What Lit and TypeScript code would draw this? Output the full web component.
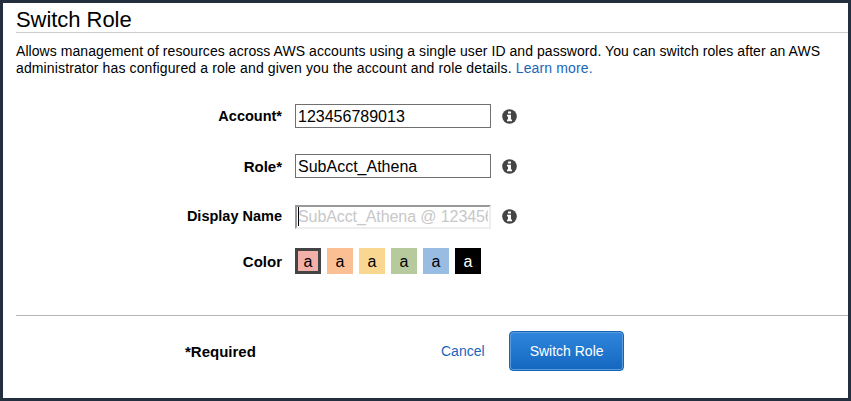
import { LitElement, html, css, svg } from "lit";
import { customElement } from "lit/decorators.js";
import { classMap } from "lit/directives/class-map.js";

const swatches = ["red", "orange", "yellow", "green", "blue", "black"];

@customElement("info-icon")
class InfoIcon extends LitElement {
  static styles = css`
    :host { display: block; width: 15px; height: 15px; }
    svg { display: block; }
  `;
  render() {
    return html`<svg width="15" height="15" viewBox="0 0 15 15">
      ${svg`<circle cx="7.5" cy="7.5" r="7.3" fill="#444"/>
      <path fill="#fff" d="M6 2.5h3v2H6zM5 5.8h4v4.7h1v1.7H5v-1.7h1V7.5H5z"/>`}
    </svg>`;
  }
}

@customElement("app-root")
class AppRoot extends LitElement {
  static styles = css`
    :host {
      display: block;
      box-sizing: border-box;
      width: 851px;
      height: 401px;
      border: 3px solid #232f3e;
      background: #fff;
      color: #000;
      font: 14px/17px "Liberation Sans", Arial, sans-serif;
      padding-left: 13px;
      overflow: hidden;
    }
    h1 {
      margin: 0;
      height: 29px;
      border-bottom: 1px solid #ccc;
      font-size: 22px;
      font-weight: 400;
      line-height: 33px;
      letter-spacing: -0.05px;
    }
    .intro { margin: 10px 0 0; height: 34px; white-space: nowrap; }
    .line { display: block; letter-spacing: 0.062px; }
    .line + .line { letter-spacing: 0.128px; }
    .link { color: #1a66bb; text-decoration: none; }
    .row { display: flex; align-items: center; height: 24px; margin-bottom: 26px; }
    .form { padding-top: 27px; height: 239px; box-sizing: border-box; border-bottom: 1px solid #b5b5b5; }
    .label { width: 266px; margin-right: 13px; text-align: right; font-weight: 700; font-size: 14.5px; white-space: nowrap; }
    .large { font-size: 15px; }
    .field {
      box-sizing: border-box;
      width: 196px;
      height: 24px;
      border: 1px solid #707070;
      padding: 0 2px;
      font-size: 16px;
      line-height: 23px;
      white-space: nowrap;
      overflow: hidden;
      margin-right: 11px;
    }
    .empty {
      display: flex;
      position: relative;
      top: 1px;
      border: 2px solid;
      border-color: #999 #eee #eee #999;
      padding: 0 1px;
      color: #c8c8c8;
      line-height: 20px;
      letter-spacing: -0.09px;
    }
    .value { overflow: hidden; }
    .caret { flex: none; width: 1px; height: 19px; background: #000; margin-right: -1px; }
    .colors { height: 26px; margin-top: -6px; }
    .palette { display: flex; gap: 6px; }
    .swatch {
      box-sizing: border-box;
      width: 26px;
      height: 26px;
      font-size: 16px;
      line-height: 27px;
      text-align: center;
    }
    .chosen { border: 3px solid #444; line-height: 21px; }
    .red { background: #f2b0a9; }
    .orange { background: #fbbf93; }
    .yellow { background: #fad791; }
    .green { background: #b7ca9d; }
    .blue { background: #99bce3; }
    .black { background: #000; color: #fff; }
    .actions { display: flex; align-items: center; height: 40px; padding-top: 15px; }
    .required { width: 256px; padding-left: 169px; box-sizing: border-box; font-weight: 700; font-size: 15px; white-space: nowrap; margin-right: 169px; }
    .button {
      box-sizing: border-box;
      width: 115px;
      height: 40px;
      margin-left: 24px;
      border: 1px solid #1464b8;
      border-radius: 4px;
      background: linear-gradient(#2f86dc, #1467bf);
      box-shadow: inset 0 0 0 1px #5a9bdc;
      color: #fff;
      font: inherit;
      padding: 0 0 0 1px;
    }
  `;

  label(text: string, required = false, large = false) {
    return html`<span class=${classMap({ label: true, large })}>${text}${required ? "*" : ""}</span>`;
  }

  render() {
    return html`
      <h1>Switch Role</h1>
      <p class="intro">
        <span class="line">Allows management of resources across AWS accounts using a single user ID and password. You can switch roles after an AWS</span>
        <span class="line">administrator has configured a role and given you the account and role details. <a class="link">Learn more.</a></span>
      </p>
      <div class="form">
        <div class="row">${this.label("Account", true)}<div class="field">123456789013</div><info-icon></info-icon></div>
        <div class="row">${this.label("Role", true, true)}<div class="field">SubAcct_Athena</div><info-icon></info-icon></div>
        <div class="row">${this.label("Display Name")}<div class="field empty"><span class="caret"></span><span class="value">SubAcct_Athena @ 123456789013</span></div><info-icon></info-icon></div>
        <div class="row colors">${this.label("Color", false, true)}
          <div class="palette">
            ${swatches.map((name, i) => html`<span class=${classMap({ swatch: true, [name]: true, chosen: i === 0 })}>a</span>`)}
          </div>
        </div>
      </div>
      <div class="actions">
        <span class="required">*Required</span>
        <a class="link">Cancel</a>
        <button class="button">Switch Role</button>
      </div>
    `;
  }
}
